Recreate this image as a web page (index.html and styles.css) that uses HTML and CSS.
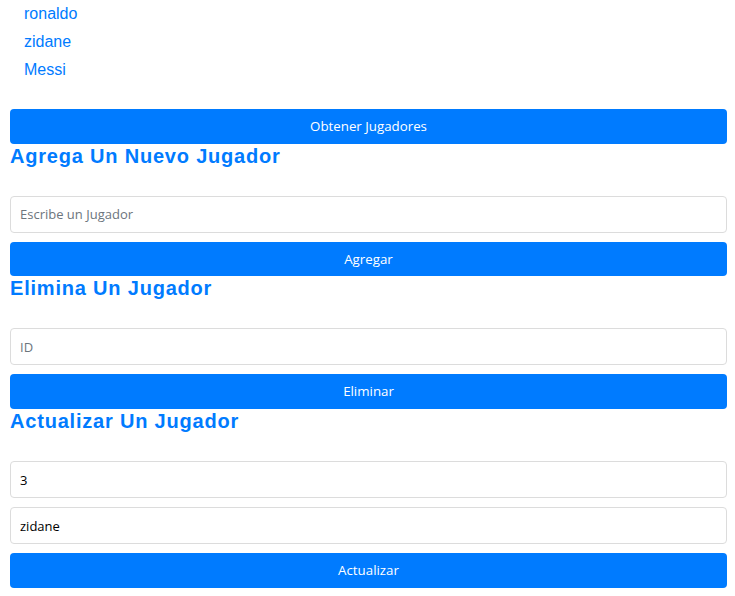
FILE: index.html
```html
<!DOCTYPE html>
<html lang="es">
<head>
<meta charset="utf-8">
<title>Jugadores</title>
<link rel="stylesheet" href="styles.css">
</head>
<body>
<ul class="players">
  <li>ronaldo</li>
  <li>zidane</li>
  <li>Messi</li>
</ul>
<button class="btn">Obtener Jugadores</button>
<h2 class="title">Agrega Un Nuevo Jugador</h2>
<input class="field" type="text" placeholder="Escribe un Jugador">
<button class="btn">Agregar</button>
<h2 class="title">Elimina Un Jugador</h2>
<input class="field" type="text" placeholder="ID">
<button class="btn">Eliminar</button>
<h2 class="title">Actualizar Un Jugador</h2>
<input class="field" type="text" value="3">
<input class="field" type="text" value="zidane">
<button class="btn">Actualizar</button>
</body>
</html>
```
FILE: styles.css
```css
html, body {
  margin: 0;
  background: #fff;
}
body {
  padding: 0 8px 0 10px;
  font-family: "Liberation Sans", Arial, sans-serif;
}
.players {
  list-style: none;
  margin: 0 0 25px;
  padding: 0 0 0 14px;
}
.players li {
  font-size: 16px;
  line-height: 28px;
  color: #007bff;
}
.btn {
  display: block;
  width: 100%;
  height: 34.7px;
  margin: 0;
  padding: 0 12px;
  border: 0;
  border-radius: 4px;
  background: #007bff;
  color: #fff;
  font-family: "Open Sans", sans-serif;
  font-size: 13.3px;
  line-height: 35px;
  text-align: center;
}
.title {
  margin: 0 0 28px;
  font-size: 20px;
  line-height: 24px;
  font-weight: bold;
  color: #007bff;
  letter-spacing: 0.8px;
}
.field {
  display: block;
  box-sizing: border-box;
  width: 100%;
  height: 37px;
  margin: 0 0 9px;
  padding: 0 9px;
  border: 1px solid #dcdcdc;
  border-radius: 4px;
  background: #fff;
  color: #000;
  font-family: "Open Sans", sans-serif;
  font-size: 13px;
  outline: none;
}
.field::placeholder {
  color: #6c757d;
}
```
